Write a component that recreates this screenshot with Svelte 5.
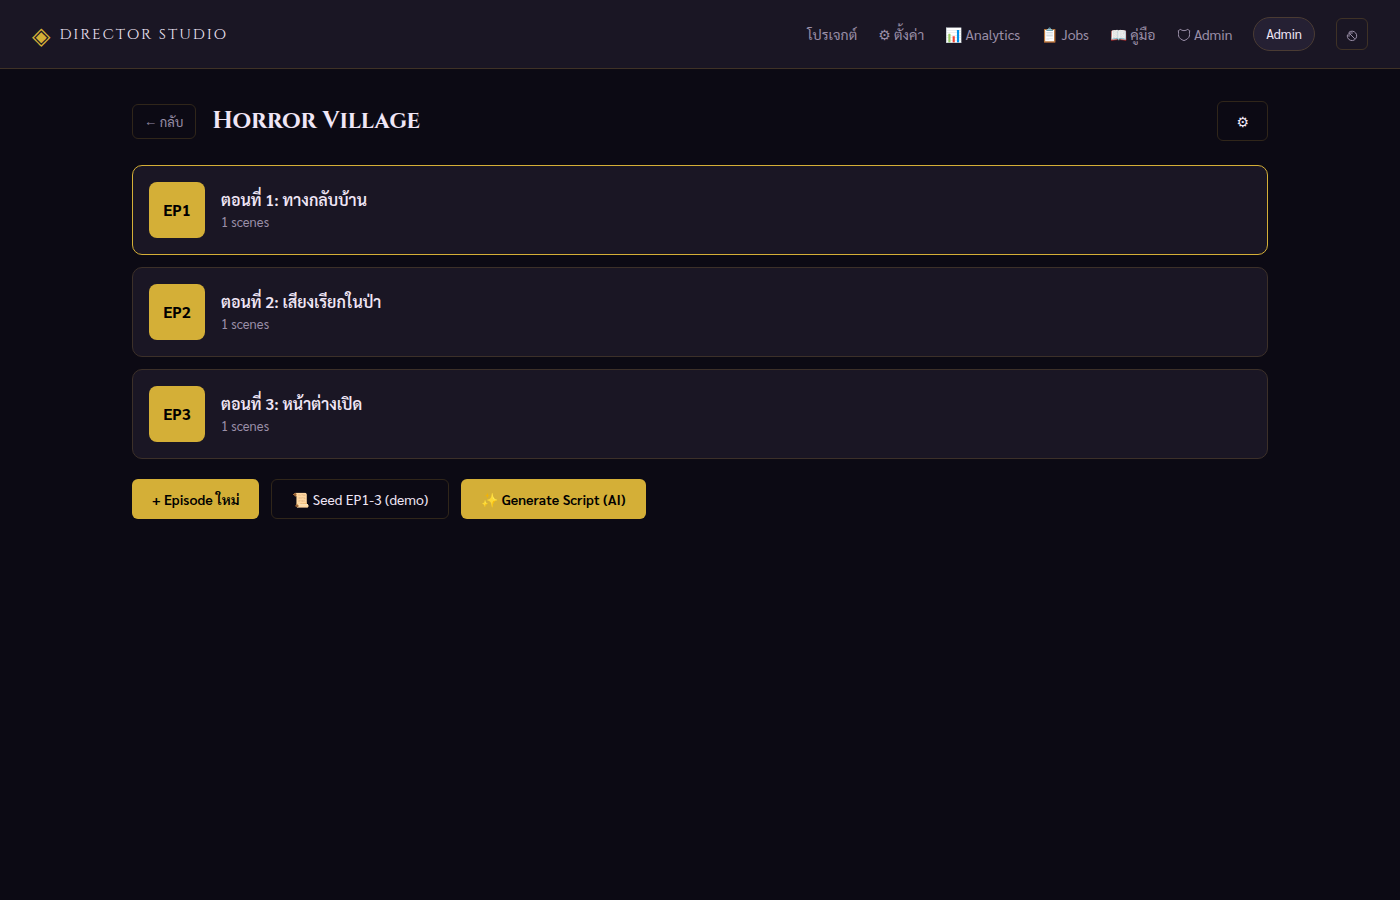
<script>
  let selected = $state(1);

  const links = [
    { href: '#/projects', label: 'โปรเจกต์' },
    { href: '#/settings', label: '⚙ ตั้งค่า' },
    { href: '#/analytics', label: '📊 Analytics' },
    { href: '#/jobs', label: '📋 Jobs' },
    { href: '#/guide', label: '📖 คู่มือ' },
    { href: '#/admin', label: 'Admin', shield: true }
  ];

  const episodes = [
    { number: 1, title: 'ทางกลับบ้าน', scenes: 1 },
    { number: 2, title: 'เสียงเรียกในป่า', scenes: 1 },
    { number: 3, title: 'หน้าต่างเปิด', scenes: 1 }
  ];
</script>

<header class="topbar">
  <a class="brand" href="#/">
    <span class="brand-icon">◈</span>
    <span class="brand-name">DIRECTOR STUDIO</span>
  </a>
  <nav>
    {#each links as link}
      <a href={link.href}>
        {#if link.shield}
          <svg class="shield" viewBox="0 0 14 14" width="14" height="14" aria-hidden="true">
            <path d="M7 2.6C5.6 2.6 4.4 2.2 3.2 1.2C2.8 2 2.2 2.5 1.2 2.8C2 4.4 1.2 6 1.6 8C2.2 10.4 4.4 11.6 7 12.6C9.6 11.6 11.8 10.4 12.4 8C12.8 6 12 4.4 12.8 2.8C11.8 2.5 11.2 2 10.8 1.2C9.6 2.2 8.4 2.6 7 2.6Z" />
          </svg>
        {/if}
        {link.label}
      </a>
    {/each}
    <span class="user">Admin</span>
    <button class="logout" aria-label="Logout">
      <svg viewBox="0 0 12 12" width="12" height="12" aria-hidden="true">
        <path d="M2.6 2.6A4.7 4.7 0 1 1 1.6 7.6M1.6 7.6A4.7 4.7 0 0 1 1.5 4.6" />
        <path d="M8.8 8.8L3.4 3.4M3 6.8V3H6.8" />
      </svg>
    </button>
  </nav>
</header>

<main>
  <div class="page-header">
    <button class="back">← กลับ</button>
    <h1>Horror Village</h1>
    <button class="btn icon" aria-label="Project settings">⚙</button>
  </div>

  <div class="episodes">
    {#each episodes as ep}
      <button class="episode" class:active={selected === ep.number} onclick={() => (selected = ep.number)}>
        <span class="thumb">EP{ep.number}</span>
        <span class="info">
          <span class="title">ตอนที่ {ep.number}: {ep.title}</span>
          <span class="meta">{ep.scenes} scenes</span>
        </span>
      </button>
    {/each}
  </div>

  <div class="actions">
    <button class="btn primary">+ Episode ใหม่</button>
    <button class="btn">📜 Seed EP1-3 (demo)</button>
    <button class="btn primary">✨ Generate Script (AI)</button>
  </div>
</main>

<style>
  :global(body) {
    min-height: 100vh;
    background: #0c0a14;
    color: #f0e6f6;
    font-family: 'Sarabun', 'Noto Sans Thai', 'DejaVu Sans', sans-serif;
    font-size: 16px;
    line-height: 24px;
  }

  button {
    font-family: inherit;
    color: inherit;
    cursor: pointer;
  }

  svg {
    fill: none;
    stroke: currentColor;
    stroke-width: 1;
  }

  .topbar {
    display: flex;
    align-items: center;
    justify-content: space-between;
    min-height: 68px;
    padding: 0 32px;
    background: #1a1624;
    border-bottom: 1px solid #3f3226;
  }

  .brand {
    display: flex;
    align-items: center;
    gap: 9px;
    color: #f0e6f6;
    text-decoration: none;
  }

  .brand-icon {
    color: #d4af37;
    font-size: 24px;
  }

  .brand-name {
    font-family: 'Cinzel', 'Liberation Serif', serif;
    font-size: 15px;
    letter-spacing: 2px;
    padding-top: 2px;
  }

  nav {
    display: flex;
    align-items: center;
    gap: 21px;
    font-size: 14px;
  }

  nav a {
    color: #9a8fa8;
    text-decoration: none;
  }

  .shield {
    vertical-align: -2px;
  }

  .user {
    padding: 4px 12px;
    background: #252033;
    border: 1px solid #4a3b33;
    border-radius: 20px;
    font-size: 13px;
  }

  .logout {
    display: flex;
    align-items: center;
    justify-content: center;
    width: 32px;
    height: 32px;
    padding: 4px 0 0;
    background: transparent;
    border: 1px solid #3f3226;
    border-radius: 6px;
    color: #9a8fa8;
  }

  main {
    max-width: 1136px;
    margin: 0 auto;
    padding: 32px;
  }

  .page-header {
    display: flex;
    align-items: center;
    gap: 16px;
    margin-bottom: 24px;
  }

  h1 {
    flex: 1;
    margin: 0;
    font-family: 'Cinzel', 'Liberation Serif', serif;
    font-size: 24px;
    font-weight: 700;
    line-height: 40px;
  }

  .back {
    padding: 6px 12px;
    background: transparent;
    border: 1px solid #30261a;
    border-radius: 6px;
    color: #9a8fa8;
    font-size: 13px;
    line-height: 21px;
  }

  .episodes {
    display: flex;
    flex-direction: column;
    gap: 12px;
    margin-bottom: 20px;
  }

  .episode {
    display: flex;
    align-items: center;
    gap: 16px;
    padding: 16px;
    background: #1a1624;
    border: 1px solid #3c3029;
    border-radius: 10px;
    text-align: left;
  }

  .episode.active {
    border-color: #d4af37;
  }

  .thumb {
    display: flex;
    align-items: center;
    justify-content: center;
    width: 56px;
    height: 56px;
    background: #d4af37;
    border-radius: 8px;
    color: #000;
    font-size: 16px;
    font-weight: 700;
    line-height: 26px;
  }

  .info {
    display: flex;
    flex-direction: column;
  }

  .title {
    font-size: 16px;
    font-weight: 600;
    line-height: 24px;
  }

  .meta {
    color: #9a8fa8;
    font-size: 13px;
    line-height: 20px;
  }

  .actions {
    display: flex;
    flex-wrap: wrap;
    gap: 12px;
  }

  .btn {
    min-height: 40px;
    padding: 0 20px;
    background: transparent;
    border: 1px solid #30261a;
    border-radius: 6px;
    font-size: 14px;
    line-height: 18px;
  }

  .btn.icon {
    padding: 0 18px;
  }

  .btn.primary {
    background: #d4af37;
    border: none;
    color: #000;
    font-weight: 600;
  }
</style>
